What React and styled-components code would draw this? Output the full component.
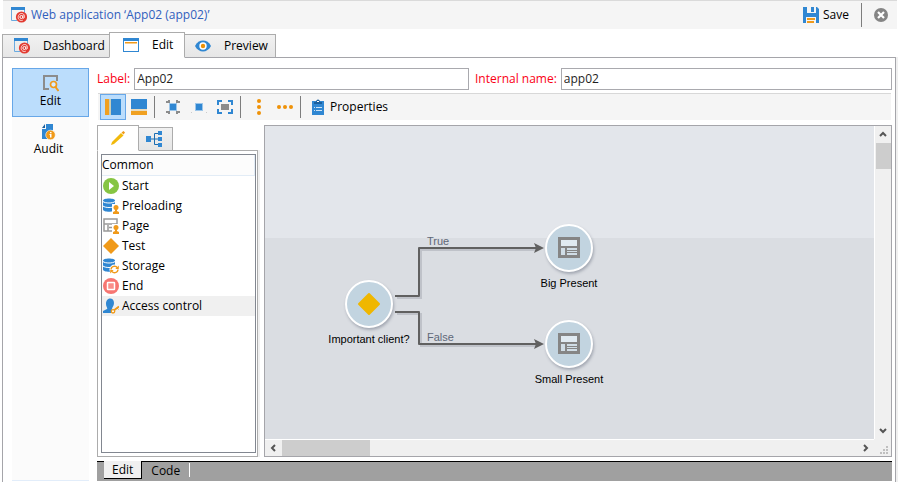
import React, { useState } from "react";
import styled, { createGlobalStyle, css } from "styled-components";

const GlobalStyle = createGlobalStyle`
  * { box-sizing: border-box; }
  body {
    margin: 0;
    background: #fff;
    color: #000;
    font: 12px/16px "Open Sans", "Noto Sans", sans-serif;
  }
  button, input {
    font: inherit;
    color: inherit;
    margin: 0;
  }
  svg { display: block; flex: none; }
`;

const BLUE = "#3087d2";
const ORANGE = "#f09a1a";
const GREY = "#8c8c8c";

const Page = styled.div`
  display: flex;
  flex-direction: column;
  min-height: 100vh;
  padding: 0 14px 3px 2px;
`;

const Header = styled.header`
  display: flex;
  align-items: center;
  height: 29px;
  margin-left: 1px;
  padding: 0 9px 0 8px;
  background: #f5f5f5;
  border-top: 1px solid #dadada;
`;

const Title = styled.h1`
  flex: 1;
  margin: 0 0 0 4px;
  font-size: 12px;
  font-weight: 400;
  color: #3160bd;
`;

const PlainButton = styled.button`
  display: flex;
  align-items: center;
  gap: ${(p) => p.$gap || 4}px;
  padding: 0;
  background: none;
  border: 0;
`;

const Separator = styled.span`
  width: 1px;
  height: 22px;
  margin: 0 5px 0 2px;
  background: #7d7d7d;
`;

const WideSeparator = styled(Separator)`
  height: 24px;
  margin: 0 12px;
`;

const Tabs = styled.nav`
  display: flex;
  align-items: flex-end;
  height: 26px;
  margin-top: 3px;
  margin-bottom: -1px;
`;

const Tab = styled.button`
  display: flex;
  align-items: center;
  gap: 13px;
  width: ${(p) => p.$width}px;
  height: 24px;
  padding: 0 0 0 ${(p) => p.$indent}px;
  border: 1px solid #acacac;
  background: linear-gradient(#f1f1f1, #e6e6e6);
  & + & { margin-left: -1px; }
  ${(p) =>
    p.$active &&
    css`
      z-index: 1;
      height: 26px;
      background: #fff;
      border-bottom-color: #fff;
    `}
`;

const Panel = styled.div`
  flex: 1;
  display: flex;
  gap: 8px;
  margin-right: 1px;
  padding: 10px 3px 0 9px;
  border: solid #a5a5aa;
  border-width: 1px 1px 0;
  box-shadow: 2px 0 #f0f0f0;
`;

const Sidebar = styled.nav`
  width: 77px;
  margin-bottom: 1px;
  background: #fbfbfb;
  border-bottom: 1px solid #e2edfa;
`;

const SideButton = styled.button`
  display: flex;
  flex-direction: column;
  align-items: center;
  gap: 1px;
  width: 100%;
  height: 48px;
  padding: 6px 4px 0 0;
  background: none;
  border: 1px solid transparent;
  ${(p) =>
    p.$active &&
    css`
      height: 49px;
      padding-right: 0;
      background: #bbddfc;
      border-color: #67a7e8;
    `}
`;

const Main = styled.main`
  flex: 1;
  min-width: 0;
  display: flex;
  flex-direction: column;
`;

const Fields = styled.div`
  display: grid;
  grid-template-columns: 372fr 417fr;
  gap: 6px;
`;

const Field = styled.label`
  display: flex;
  align-items: center;
  gap: 4px;
  color: #fa0014;
  white-space: nowrap;
`;

const TextBox = styled.input`
  flex: 1;
  min-width: 0;
  height: 22px;
  padding: 0 2px 2px;
  color: #1e1e1e;
  background: #fff;
  border: 1px solid #a9a9ae;
`;

const Toolbar = styled.div`
  display: flex;
  align-items: center;
  height: 27px;
  margin: 3px 1px 0;
  padding: 0 2px;
  background: #f5f5f5;
  border-top: 1px solid #d8d8d8;
`;

const Tool = styled.button`
  display: flex;
  align-items: center;
  justify-content: center;
  width: 26px;
  height: 26px;
  padding: 0;
  background: ${(p) => (p.$active ? "#bbddfc" : "none")};
  border: 1px solid ${(p) => (p.$active ? "#67a7e8" : "transparent")};
`;

const TextTool = styled(PlainButton)`
  gap: 6px;
  padding: 0 6px;
`;

const Workspace = styled.div`
  flex: 1;
  display: flex;
  gap: 6px;
  margin-top: 5px;
`;

const Palette = styled.section`
  display: flex;
  flex-direction: column;
  width: 161px;
`;

const PaletteTabs = styled(Tabs)`
  margin-top: 0;
`;

const PaletteBody = styled.div`
  flex: 1;
  display: flex;
  padding: 3px 1px 3px 3px;
  border: 1px solid #acacac;
  box-shadow: 2px 0 #f0f0f0;
`;

const List = styled.ul`
  flex: 1;
  margin: 0;
  padding: 0;
  list-style: none;
  border: 1px solid #828790;
`;

const ListHeader = styled.li`
  display: flex;
  align-items: center;
  height: 21px;
  background: #fcfcfc;
  border: solid #e2ecf6;
  border-width: 0 1px 1px 0;
`;

const ListItem = styled.li`
  display: flex;
  align-items: center;
  gap: 3px;
  height: 20px;
  padding-left: 1px;
  background: ${(p) => (p.$active ? "#f0f0f0" : "none")};
`;

const Viewport = styled.section`
  flex: 1;
  min-width: 0;
  display: grid;
  grid-template: 1fr 17px / 1fr 17px;
  background: #f0f0f0;
  border: 1px solid #a5a5aa;
`;

const Canvas = styled.div`
  position: relative;
  overflow: hidden;
  background: linear-gradient(#e3e6eb 0 112px, #dadde2 112px);
  font: 11px/14px "Liberation Sans", Arial, sans-serif;
`;

const Edges = styled.svg`
  position: absolute;
  inset: 0;
`;

const EdgeLabel = styled.span`
  position: absolute;
  left: ${(p) => p.$x}px;
  top: ${(p) => p.$y}px;
  color: #5f6878;
`;

const Node = styled.div`
  position: absolute;
  left: ${(p) => p.$x}px;
  top: ${(p) => p.$y}px;
  display: flex;
  flex-direction: column;
  align-items: center;
  gap: 4px;
  width: 100px;
  white-space: nowrap;
`;

const Disc = styled.span`
  display: flex;
  align-items: center;
  justify-content: center;
  width: 48px;
  height: 48px;
  border: 2px solid #fff;
  border-radius: 50%;
  background: #c2d4e0;
  box-shadow: 1px 2px 3px rgba(60, 70, 90, 0.35);
`;

const VScroll = styled.div`
  display: flex;
  flex-direction: column;
  align-items: center;
  justify-content: space-between;
  border-left: 1px solid #fff;
`;

const HScroll = styled.div`
  display: flex;
  align-items: center;
  justify-content: space-between;
  border-top: 1px solid #fff;
`;

const Arrow = styled.button`
  display: flex;
  align-items: center;
  justify-content: center;
  width: 16px;
  height: 16px;
  padding: 0;
  background: none;
  border: 0;
`;

const Track = styled.div`
  flex: 1;
`;

const Thumb = styled.div`
  width: ${(p) => p.$width}px;
  height: ${(p) => p.$height}px;
  margin: ${(p) => p.$margin || 0};
  background: #cdcdcd;
`;

const Grip = styled.div`
  display: flex;
  align-items: flex-end;
  justify-content: flex-end;
  padding: 0 3px 2px 0;
`;

const BottomBar = styled.nav`
  display: flex;
  align-items: flex-start;
  height: 20px;
  margin: 4px 0 1px;
  padding-left: 7px;
  background: #a0a0a0;
  border-top: 1px solid #000;
`;

const BottomTab = styled.button`
  height: 17px;
  padding: 0 9px;
  line-height: 16px;
  border: 0;
  background: none;
  ${(p) =>
    p.$active &&
    css`
      margin-top: -1px;
      height: 18px;
      padding: 0 8px;
      background: #f0f0f0;
      border: solid #000;
      border-width: 0 1px 1px 0;
    `}
`;

const BottomRule = styled.span`
  width: 1px;
  height: 14px;
  margin-top: 1px;
  background: #fff;
`;

const AppIcon = () => (
  <svg width="16" height="16" viewBox="0 0 16 16">
    <path d="M0 0h14v3H0z" fill={BLUE} />
    <path d="M.5 3v10.5H6M13.5 3v3" fill="none" stroke="#6aaae0" />
    <circle cx="10.5" cy="10" r="5.6" fill="#e23a30" />
    <circle cx="10.4" cy="10" r="1.5" fill="none" stroke="#fff" strokeWidth="1" />
    <path d="M12.2 8.2c-.5 1.8-.5 3.1.4 3.1 1.6-.5 1.2-4.8-1.9-4.8-4.4 0-4.9 7-.3 7l1.4-.3" fill="none" stroke="#fff" strokeWidth=".8" />
  </svg>
);

const WindowIcon = () => (
  <svg width="16" height="14" viewBox="0 0 16 14">
    <path d="M0 0h16v14H0z" fill={BLUE} />
    <path d="M1 3h14v10H1z" fill="#fff" />
    <path d="M2 4h12v1.5H2z" fill={ORANGE} />
  </svg>
);

const EyeIcon = () => (
  <svg width="16" height="12" viewBox="0 0 16 12">
    <path d="M0 6C3.5-1.3 12.5-1.3 16 6 12.5 13.3 3.5 13.3 0 6z" fill={BLUE} />
    <circle cx="8" cy="6" r="3.7" fill="#fff" />
    <circle cx="8" cy="6" r="2.2" fill="#ed9207" />
  </svg>
);

const SaveIcon = () => (
  <svg width="16" height="16" viewBox="0 0 16 16">
    <path d="M0 0h14l2 2v14H0z" fill={BLUE} />
    <path d="M4 0h9v6H4z" fill="#f5f5f5" />
    <path d="M8 0h3v5H8z" fill={BLUE} />
    <path d="M3 10h10v6H3z" fill="#f5f5f5" />
    <path d="M4 11h8v2H4zM4 14h7v2H4z" fill={ORANGE} />
  </svg>
);

const CloseIcon = () => (
  <svg width="14" height="14" viewBox="0 0 14 14">
    <circle cx="7" cy="7" r="7" fill="#858585" />
    <path d="M4 4l6 6M10 4l-6 6" stroke="#fff" strokeWidth="2.2" />
  </svg>
);

const InspectIcon = () => (
  <svg width="16" height="17" viewBox="0 0 16 17">
    <path d="M6 14H1V1h13v5" fill="none" stroke={GREY} strokeWidth="2" />
    <circle cx="10.500" cy="9.5" r="3" fill="#d6ebff" stroke={ORANGE} strokeWidth="1.7" />
    <path d="M12.500 12l3 4" stroke={ORANGE} strokeWidth="2" />
  </svg>
);

const AuditIcon = () => (
  <svg width="16" height="16" viewBox="0 0 16 16">
    <path d="M5 0h7v6L7 9v6H1V5h4z" fill={BLUE} />
    <path d="M1 4l3-4v4z" fill="#1b5f9d" />
    <circle cx="9.5" cy="11" r="4.8" fill={ORANGE} stroke="#fbfbfb" strokeWidth=".6" />
    <path d="M9 8h1.500v1.300H9zM8.500 10h2v3.500H9V11h-.5z" fill="#fff" />
  </svg>
);

const ColumnsIcon = () => (
  <svg width="16" height="16" viewBox="0 0 16 16">
    <path d="M0 0h4v16H0z" fill="#f0a020" />
    <path d="M4 0h2v16H4z" fill="#c8cdb8" />
    <path d="M6 0h10v16H6z" fill={BLUE} />
  </svg>
);

const RowsIcon = () => (
  <svg width="16" height="16" viewBox="0 0 16 16">
    <path d="M0 0h16v10H0z" fill={BLUE} />
    <path d="M0 10h16v2H0z" fill="#e9dcc0" />
    <path d="M0 12h16v4H0z" fill="#f0a020" />
  </svg>
);

const FitIcon = () => (
  <svg width="16" height="16" viewBox="0 0 16 16">
    <path d="M4 4h8v8H4z" fill="#9cc6ea" />
    <path d="M5 5h6v6H5z" fill={BLUE} />
    <path d="M1 3h3V1M15 3h-3V1M1 13h3v2M15 13h-3v2" fill="none" stroke={GREY} strokeWidth="2" />
  </svg>
);

const ActualIcon = () => (
  <svg width="16" height="16" viewBox="0 0 16 16">
    <path d="M4 4h8v8H4z" fill="#9cc6ea" />
    <path d="M5 5h6v6H5z" fill={BLUE} />
    <path d="M0 13h1v1H0zM15 13h1v1h-1z" fill="#ccc" />
  </svg>
);

const ExpandIcon = () => (
  <svg width="16" height="16" viewBox="0 0 16 16">
    <path d="M4 5h8v6H4z" fill={GREY} />
    <path d="M1 6V2h4M11 2h4v4M1 10v4h4M11 14h4v-4" fill="none" stroke={BLUE} strokeWidth="2" />
  </svg>
);

const DotsIcon = ({ vertical }) => (
  <svg width="16" height="16" viewBox="0 0 16 16" fill="#ef9208">
    {[2, 8, 14].map((n) => (
      <circle key={n} cx={vertical ? 8 : n} cy={vertical ? n : 8} r="2" />
    ))}
  </svg>
);

const ClipboardIcon = () => (
  <svg width="12" height="16" viewBox="0 0 12 16">
    <path d="M0 2h12v14H0z" fill={BLUE} />
    <path d="M2 5V3h2c0-3.5 4-3.5 4 0h2v2z" fill="#1b5f9d" />
    <path d="M5 2h2v1H5z" fill="#fff" />
    <path d="M2 8.5h1m1 0h6M2 11.5h1m1 0h6" stroke="#cfe4f6" />
  </svg>
);

const PencilIcon = () => (
  <svg width="16" height="16" viewBox="0 0 16 16">
    <path d="M2 12L11 3l2.500 2.500L4 14l-3 1z" fill="#f1b90c" />
    <path d="M11.500 2.500l2-1.500 1.500 1.500-1.500 2z" fill={ORANGE} />
  </svg>
);

const TreeIcon = () => (
  <svg width="16" height="16" viewBox="0 0 16 16">
    <path d="M5 8h7M12 2.500H8.500v11H12" fill="none" stroke="#1b6cb0" />
    <path d="M0 5h5v6H0zM12 0h4v4h-4zM12 6h4v4h-4zM12 12h4v4h-4z" fill={BLUE} />
  </svg>
);

const StartIcon = () => (
  <svg width="16" height="16" viewBox="0 0 16 16">
    <circle cx="8" cy="8" r="8" fill="#86c543" />
    <path d="M6 4l5 4-5 4z" fill="#fff" />
  </svg>
);

const Database = () => (
  <>
    <path d="M0 2.5C0-.3 12-.3 12 2.5v9c0 3-12 3-12 0z" fill={BLUE} />
    <path d="M0 3.5c2 2 10 2 12 0M0 8c2 2 10 2 12 0" fill="none" stroke="#fff" />
  </>
);

const Person = () => (
  <>
    <path d="M9 6h7v10H9z" fill="#fff" />
    <circle cx="13" cy="9.500" r="2.500" fill={ORANGE} />
    <path d="M12 11h2v2l2 1v2h-6v-2l2-1z" fill={ORANGE} />
  </>
);

const PreloadIcon = () => (
  <svg width="16" height="16" viewBox="0 0 16 16">
    <Database />
    <Person />
  </svg>
);

const PageUserIcon = () => (
  <svg width="16" height="16" viewBox="0 0 16 16">
    <path d="M1 1h13v5H1zM1 6v7h9M5 7v6M6 9.500h5" fill="none" stroke="#999" strokeWidth="1.5" />
    <Person />
  </svg>
);

const TestIcon = () => (
  <svg width="16" height="16" viewBox="0 0 16 16">
    <path d="M8 0l8 8-8 8-8-8z" fill={ORANGE} />
  </svg>
);

const StorageIcon = () => (
  <svg width="16" height="16" viewBox="0 0 16 16">
    <Database />
    <circle cx="11.500" cy="11.500" r="5" fill="#fff" />
    <path d="M8 11.500a3.500 3.500 0 0 1 6.500-1.500M15 11.500a3.500 3.500 0 0 1-6.500 1.500" fill="none" stroke={ORANGE} strokeWidth="1.4" />
    <path d="M15.800 7.500v3.500h-3.500zM7.200 15.500V12h3.500z" fill={ORANGE} />
  </svg>
);

const EndIcon = () => (
  <svg width="16" height="16" viewBox="0 0 16 16">
    <circle cx="8" cy="8" r="8" fill="#f77672" />
    <rect x="4.5" y="4.5" width="7" height="7" rx=".5" fill="#fa8f8b" stroke="#fff" strokeWidth="1.5" />
  </svg>
);

const AccessIcon = () => (
  <svg width="16" height="16" viewBox="0 0 16 16">
    <path d="M0 15v-2l4-2c1-1-1-2-1-5 0-7 8-7 8-1 0 3-2 4-2 6l-1 4z" fill={BLUE} />
    <path d="M16 8.500L10 13" stroke={ORANGE} strokeWidth="1.800" />
    <circle cx="10" cy="13.3" r="1.7" fill="#fff" stroke={ORANGE} strokeWidth="1.4" />
    <path d="M14 10l1.500 1.500" stroke={ORANGE} />
  </svg>
);

const PageGlyph = () => (
  <svg width="22" height="22" viewBox="0 0 22 22">
    <path d="M0 0h22v21H0z" fill="#858585" />
    <path d="M3 3h16v6H3z" fill="#e0eaf1" />
    <path d="M3 11h4v7H3zM9 11h10v2H9zM9 14h10v1H9zM9 16h10v2H9z" fill="#d0dde6" />
  </svg>
);

const DiamondGlyph = () => (
  <svg width="24" height="24" viewBox="0 0 24 24">
    <path d="M12 2l10 10-10 10L2 12z" fill="#efb700" stroke="#efb700" strokeWidth="2" strokeLinejoin="round" />
  </svg>
);

const CHEVRONS = {
  up: "M1 6l3-3 3 3",
  down: "M1 2l3 3 3-3",
  left: "M6 1L3 4l3 3",
  right: "M2 1l3 3-3 3",
};

const Chevron = ({ to }) => (
  <svg width="8" height="8" viewBox="0 0 8 8">
    <path d={CHEVRONS[to]} fill="none" stroke="#555" strokeWidth="2" />
  </svg>
);

const GripIcon = () => (
  <svg width="8" height="8" viewBox="0 0 8 8">
    <path d="M6 0h2v2H6zM3 3h2v2H3zM6 3h2v2H6zM0 6h2v2H0zM3 6h2v2H3zM6 6h2v2H6z" fill="#bfbfbf" />
  </svg>
);

const COMPONENTS = [
  ["Start", StartIcon],
  ["Preloading", PreloadIcon],
  ["Page", PageUserIcon],
  ["Test", TestIcon],
  ["Storage", StorageIcon],
  ["End", EndIcon],
  ["Access control", AccessIcon],
];

const EDGE_PATHS = ["M130 170h24v-48h117", "M130 186h24v32h117"];

function Diagram() {
  return (
    <Canvas>
      <Edges width="100%" height="100%">
        <g fill="none" stroke="#bfc2c9" strokeWidth="2" transform="translate(2 2)">
          {EDGE_PATHS.map((d) => <path key={d} d={d} />)}
        </g>
        <g fill="none" stroke="#606060" strokeWidth="2" strokeLinejoin="round">
          {EDGE_PATHS.map((d) => <path key={d} d={d} />)}
        </g>
        <path d="M269 117l10 5-10 5 2-5zM269 213l10 5-10 5 2-5z" fill="#606060" />
      </Edges>
      <EdgeLabel $x={162} $y={108}>True</EdgeLabel>
      <EdgeLabel $x={162} $y={204}>False</EdgeLabel>
      <Node $x={54} $y={154}><Disc><DiamondGlyph /></Disc>Important client?</Node>
      <Node $x={254} $y={98}><Disc><PageGlyph /></Disc>Big Present</Node>
      <Node $x={254} $y={194}><Disc><PageGlyph /></Disc>Small Present</Node>
    </Canvas>
  );
}

export default function App() {
  const [label, setLabel] = useState("App02");
  const [name, setName] = useState("app02");
  return (
    <>
      <GlobalStyle />
      <Page>
        <Header>
          <AppIcon />
          <Title>Web application ‘App02 (app02)’</Title>
          <PlainButton><SaveIcon />Save</PlainButton>
          <WideSeparator />
          <PlainButton aria-label="Close"><CloseIcon /></PlainButton>
        </Header>
        <Tabs>
          <Tab $width={108} $indent={11}><AppIcon />Dashboard</Tab>
          <Tab $width={76} $indent={13} $active><WindowIcon />Edit</Tab>
          <Tab $width={92} $indent={10}><EyeIcon />Preview</Tab>
        </Tabs>
        <Panel>
          <Sidebar>
            <SideButton $active><InspectIcon />Edit</SideButton>
            <SideButton><AuditIcon />Audit</SideButton>
          </Sidebar>
          <Main>
            <Fields>
              <Field>
                Label:
                <TextBox value={label} onChange={(e) => setLabel(e.target.value)} />
              </Field>
              <Field>
                Internal name:
                <TextBox value={name} onChange={(e) => setName(e.target.value)} />
              </Field>
            </Fields>
            <Toolbar>
              <Tool $active aria-label="Columns"><ColumnsIcon /></Tool>
              <Tool aria-label="Rows"><RowsIcon /></Tool>
              <Separator />
              <Tool aria-label="Fit"><FitIcon /></Tool>
              <Tool aria-label="Actual size"><ActualIcon /></Tool>
              <Tool aria-label="Expand"><ExpandIcon /></Tool>
              <Separator />
              <Tool aria-label="Align vertically"><DotsIcon vertical /></Tool>
              <Tool aria-label="Align horizontally"><DotsIcon /></Tool>
              <Separator />
              <TextTool><ClipboardIcon />Properties</TextTool>
            </Toolbar>
            <Workspace>
              <Palette>
                <PaletteTabs>
                  <Tab $width={42} $indent={12} $active aria-label="Components"><PencilIcon /></Tab>
                  <Tab $width={35} $indent={7} aria-label="Structure"><TreeIcon /></Tab>
                </PaletteTabs>
                <PaletteBody>
                  <List>
                    <ListHeader>Common</ListHeader>
                    {COMPONENTS.map(([text, Icon]) => (
                      <ListItem key={text} $active={text === "Access control"}>
                        <Icon />
                        {text}
                      </ListItem>
                    ))}
                  </List>
                </PaletteBody>
              </Palette>
              <Viewport>
                <Diagram />
                <VScroll>
                  <Arrow aria-label="Scroll up"><Chevron to="up" /></Arrow>
                  <Track><Thumb $width={15} $height={26} $margin="1px 0 0" /></Track>
                  <Arrow aria-label="Scroll down"><Chevron to="down" /></Arrow>
                </VScroll>
                <HScroll>
                  <Arrow aria-label="Scroll left"><Chevron to="left" /></Arrow>
                  <Track><Thumb $width={88} $height={16} $margin="0 0 0 1px" /></Track>
                  <Arrow aria-label="Scroll right"><Chevron to="right" /></Arrow>
                </HScroll>
                <Grip><GripIcon /></Grip>
              </Viewport>
            </Workspace>
            <BottomBar>
              <BottomTab $active>Edit</BottomTab>
              <BottomTab>Code</BottomTab>
              <BottomRule />
            </BottomBar>
          </Main>
        </Panel>
      </Page>
    </>
  );
}
